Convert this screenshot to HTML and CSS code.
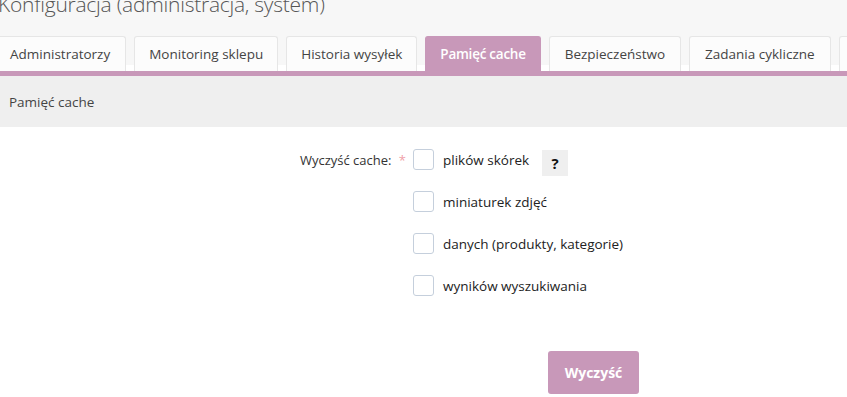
FILE: index.html
```html
<!DOCTYPE html>
<html lang="pl">
<head>
    <meta charset="UTF-8">
    <meta name="viewport" content="width=device-width, initial-scale=1.0">
    <title>Konfiguracja (administracja, system)</title>
    <link rel="stylesheet" href="styles.css">
</head>
<body>
    <div class="page">
        <h1 class="title">Konfiguracja (administracja, system)</h1>

        <nav class="tabs">
            <a href="#" class="tab">Administratorzy</a>
            <a href="#" class="tab">Monitoring sklepu</a>
            <a href="#" class="tab">Historia wysyłek</a>
            <a href="#" class="tab active">Pamięć cache</a>
            <a href="#" class="tab">Bezpieczeństwo</a>
            <a href="#" class="tab">Zadania cykliczne</a>
            <a href="#" class="tab">Inne</a>
        </nav>

        <div class="section-head">Pamięć cache</div>

        <form class="cache-form">
            <div class="form-row">
                <div class="form-label">Wyczyść cache: <span class="req">*</span></div>
                <div class="checks">
                    <label class="check">
                        <input type="checkbox" name="skins">
                        <span class="box"></span>
                        plików skórek
                        <span class="help">?</span>
                    </label>
                    <label class="check">
                        <input type="checkbox" name="thumbs">
                        <span class="box"></span>
                        miniaturek zdjęć
                    </label>
                    <label class="check">
                        <input type="checkbox" name="data">
                        <span class="box"></span>
                        danych (produkty, kategorie)
                    </label>
                    <label class="check">
                        <input type="checkbox" name="search">
                        <span class="box"></span>
                        wyników wyszukiwania
                    </label>
                </div>
            </div>
            <div class="form-actions">
                <button type="submit">Wyczyść</button>
            </div>
        </form>
    </div>
</body>
</html>
```

FILE: styles.css
```css
html { background: #fff; }
body { margin: 0; font-family: "Open Sans", "Noto Sans", sans-serif; color: #333; overflow: hidden; }
.page { margin-left: -6px; width: 1000px; background: linear-gradient(#f7f7f7, #f7f7f7) top / 100% 76px no-repeat; }
.title { margin: -11px 0 0 4px; height: 47px; font-size: 21px; font-weight: 300; color: #555; line-height: 30px; letter-spacing: -0.25px; white-space: nowrap; }
.tabs { display: flex; gap: 8px; border-bottom: 5px solid #c898b9; height: 35px; }
.tab { display: flex; align-items: center; padding: 0 15px; background: #fcfcfc; border: 1px solid #e6e6e6; border-bottom: none; border-radius: 3px 3px 0 0; color: #444; font-size: 13.5px; text-decoration: none; white-space: nowrap; }
.tab:nth-child(2), .tab:nth-child(3) { padding: 0 14px; }
.tab.active { background: #c898b9; border-color: #c898b9; color: #fff; font-weight: 600; padding: 0 14px; letter-spacing: -0.25px; }
.section-head { height: 51px; background: #efefef; padding-left: 15px; display: flex; align-items: center; font-size: 13.5px; color: #444; }
.cache-form { padding-top: 22px; }
.form-row { display: flex; gap: 7px; }
.form-label { width: 412px; text-align: right; font-size: 13px; line-height: 21px; padding-top: 1px; color: #333; }
.req { color: #f0a0a8; margin-left: 4px; }
.checks { display: flex; flex-direction: column; gap: 21px; }
.check { display: flex; align-items: center; height: 21px; font-size: 13.5px; color: #222; }
.check input { display: none; }
.box { width: 19px; height: 19px; border: 1px solid #c5cfdc; border-radius: 3px; background: #fff; margin-right: 9px; }
.help { width: 26px; height: 26px; margin-left: 13px; background: #efefef; display: flex; align-items: center; justify-content: center; font-weight: 700; font-size: 15px; color: #111; margin-top: 6px; }
.form-actions { padding: 55px 0 0 554px; }
button { width: 91px; height: 43px; background: #c898b9; color: #fff; border: none; border-radius: 3px; font-family: inherit; font-size: 14px; font-weight: 700; cursor: pointer; }
```
